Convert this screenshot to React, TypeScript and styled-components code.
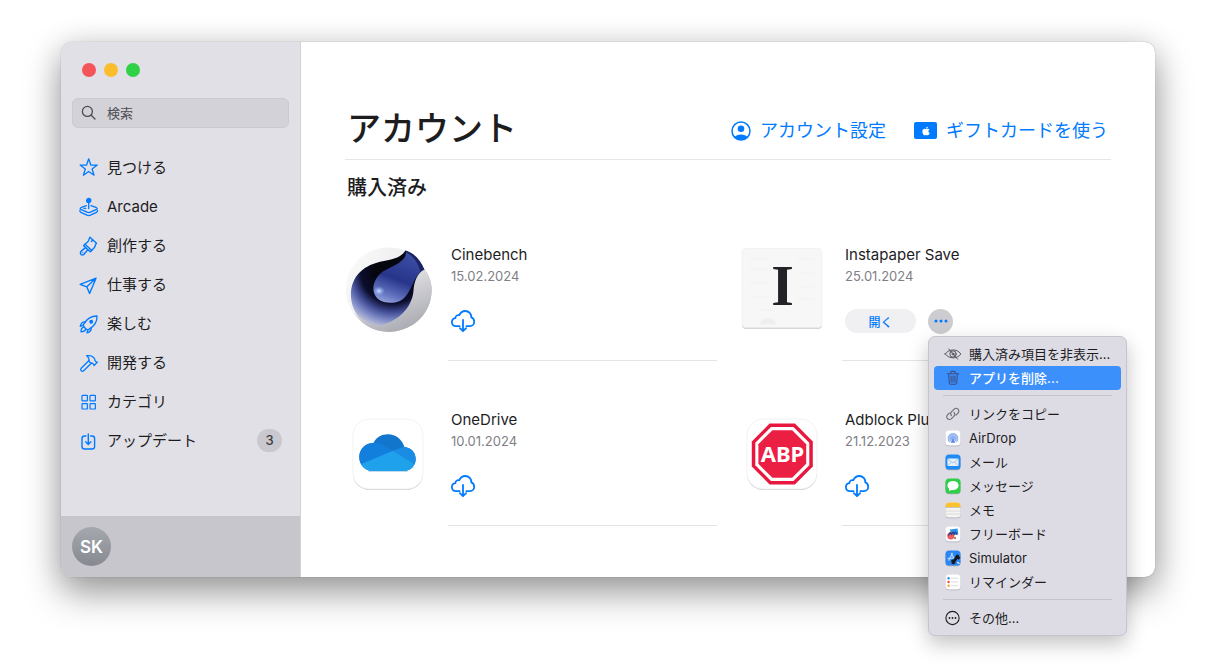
import React from "react";
import styled, { createGlobalStyle } from "styled-components";
import { Hammer } from "lucide-react";
import { FaApple } from "react-icons/fa";

const GlobalStyle = createGlobalStyle`
  *, *::before, *::after { box-sizing: border-box; }
  body {
    margin: 0;
    background: #ffffff;
    color: #1d1d1f;
    font-family: Inter, "Noto Sans CJK JP", sans-serif;
    font-size: 15px;
  }
  button, input { font: inherit; color: inherit; }
  button { border: 0; padding: 0; background: none; cursor: pointer; }
  a { color: inherit; text-decoration: none; }
  ul { list-style: none; margin: 0; padding: 0; }
  h1, h2, h3, p { margin: 0; }
  svg { display: block; flex: none; overflow: visible; }
`;

const blue = "#007aff";

const Desktop = styled.div`
  padding: 42px 61px 87px;
`;

const AppWindow = styled.div`
  display: flex;
  min-width: 900px;
  border-radius: 10px;
  background: #ffffff;
  box-shadow: 0 0 1px rgba(0, 0, 0, 0.4), 0 16px 36px rgba(0, 0, 0, 0.38), 0 0 30px rgba(0, 0, 0, 0.1);
`;

const Sidebar = styled.aside`
  display: flex;
  flex-direction: column;
  flex: none;
  width: 240px;
  border-right: 1px solid #d2d1d6;
  border-radius: 10px 0 0 10px;
  background: #e1e0e6;
`;

const TrafficLights = styled.div`
  display: flex;
  gap: 8px;
  padding: 21px 21px 0;
`;

const Light = styled.button<{ $color: string }>`
  width: 14px;
  height: 14px;
  border-radius: 50%;
  background: ${(p) => p.$color};
`;

const SearchField = styled.label`
  display: flex;
  align-items: center;
  gap: 10px;
  height: 30px;
  margin: 21px 11px 20px;
  padding: 0 8px;
  border: 1px solid #cbcad0;
  border-radius: 6px;
  background: #d3d2d8;
  color: #4c4c50;
`;

const SearchInput = styled.input`
  flex: 1;
  min-width: 0;
  padding: 0;
  border: 0;
  outline: 0;
  background: none;
  font-size: 13px;
  &::placeholder { color: #4c4c50; opacity: 1; }
`;

const NavLink = styled.a`
  display: flex;
  align-items: center;
  gap: 8px;
  height: 39px;
  padding: 0 18px;
  line-height: 24px;
  & > svg { color: ${blue}; }
`;

const Badge = styled.span`
  margin-left: auto;
  width: 25px;
  border-radius: 12px;
  background: #c9c8ce;
  color: #3c3c40;
  font-size: 13px;
  font-weight: 500;
  line-height: 23px;
  text-align: center;
`;

const Profile = styled.div`
  margin-top: auto;
  padding: 11px;
  border-bottom-left-radius: 10px;
  background: #c7c6cc;
`;

const Avatar = styled.button`
  display: block;
  width: 39px;
  height: 39px;
  border-radius: 50%;
  background: linear-gradient(#a5a8ae, #868a90);
  color: #ffffff;
  font-size: 17px;
  font-weight: 600;
`;

const Main = styled.main`
  flex: 1;
  min-width: 0;
  padding: 63px 44px 51px;
`;

const Header = styled.header`
  display: flex;
  align-items: center;
  justify-content: space-between;
  padding: 0 3px 6px 2px;
  border-bottom: 1px solid #e6e6e8;
`;

const Title = styled.h1`
  font-size: 34px;
  font-weight: 500;
  line-height: 48px;
`;

const HeaderLinks = styled.nav`
  display: flex;
  gap: 28px;
  padding-top: 3px;
`;

const HeaderLink = styled.a`
  display: flex;
  align-items: center;
  gap: 9px;
  color: ${blue};
  font-size: 18px;
  line-height: 28px;
`;

const GiftCard = styled.span`
  display: flex;
  align-items: center;
  justify-content: center;
  width: 23px;
  height: 17px;
  border-radius: 2px;
  background: ${blue};
  color: #ffffff;
`;

const SectionTitle = styled.h2`
  margin-top: 20px;
  padding-left: 2px;
  font-size: 20px;
  font-weight: 500;
  line-height: 16px;
`;

const AppGrid = styled.ul`
  display: grid;
  grid-template-columns: 1fr 1fr;
  column-gap: 22px;
`;

const AppRow = styled.li`
  display: flex;
  gap: 17px;
`;

const AppIcon = styled.div`
  padding-top: 51px;
`;

const AppInfo = styled.div`
  flex: 1;
  min-width: 0;
  padding: 48px 0 26px 3px;
  border-bottom: 1px solid #e4e4e6;
`;

const AppName = styled.h3`
  font-size: 15px;
  font-weight: 400;
  line-height: 22px;
`;

const AppDate = styled.p`
  color: #808085;
  font-size: 13px;
  line-height: 20px;
`;

const Actions = styled.div`
  display: flex;
  align-items: center;
  gap: 12px;
  height: 26px;
  margin-top: 22px;
`;

const DownloadButton = styled.button`
  color: ${blue};
`;

const OpenButton = styled.button`
  width: 71px;
  height: 24px;
  border-radius: 12px;
  background: #f0f0f2;
  color: ${blue};
  font-size: 12px;
  font-weight: 500;
`;

const MenuAnchor = styled.div`
  position: relative;
`;

const MoreButton = styled.button`
  display: flex;
  align-items: center;
  justify-content: center;
  width: 25px;
  height: 25px;
  border-radius: 50%;
  background: #cdcdd1;
  color: ${blue};
`;

const Menu = styled.div`
  position: absolute;
  top: 27px;
  left: 0;
  z-index: 1;
  width: 199px;
  padding: 5px;
  border: 1px solid #c6c5cc;
  border-radius: 7px;
  background: #dddce5;
  box-shadow: 0 8px 20px rgba(0, 0, 0, 0.24);
`;

const MenuItem = styled.button<{ $active?: boolean }>`
  display: flex;
  align-items: center;
  gap: 8px;
  width: 100%;
  height: 24px;
  padding: 0 11px;
  border-radius: 4px;
  background: ${(p) => (p.$active ? "#3b90fb" : "none")};
  color: ${(p) => (p.$active ? "#ffffff" : "#1d1d1f")};
  font-size: 13px;
  font-weight: ${(p) => (p.$active ? 500 : 400)};
  line-height: 20px;
  white-space: nowrap;
`;

const Separator = styled.hr`
  height: 1px;
  margin: 5px 9px 6px;
  border: 0;
  background: #c4c3cb;
`;

const Line = ({ size = 20, width = 1.4, children }: { size?: number; width?: number; children: React.ReactNode }) => (
  <svg width={size} height={size} viewBox={`0 0 ${size} ${size}`} fill="none" stroke="currentColor" strokeWidth={width} strokeLinecap="round" strokeLinejoin="round" aria-hidden="true">
    {children}
  </svg>
);

const nav = [
  {
    label: "見つける",
    icon: (
      <Line width={1.3}>
        <path d="M9.700 .8 L11.800 7 L18.300 7.100 L13.100 11 L15 17.200 L9.700 13.500 L4.400 17.200 L6.300 11 L1.100 7.100 L7.600 7 Z" />
      </Line>
    ),
  },
  {
    label: "Arcade",
    icon: (
      <Line width={1.3}>
        <circle cx="9.700" cy="3.600" r="2.100" fill="currentColor" />
        <path d="M9.700 4 V11.600" />
        <path d="M7.400 8.700 L1.900 10.700 Q.4 11.500 1.900 12.300 L8 15.200 Q9.700 15.900 11.400 15.200 L17.500 12.300 Q19 11.500 17.500 10.700 L12 8.700" />
        <path d="M.9 13.500 Q.6 14.700 1.900 15.300 L8 18.200 Q9.700 18.900 11.400 18.200 L17.500 15.300 Q18.800 14.700 18.500 13.500" />
        <path d="M5 11.400 H6.800" />
      </Line>
    ),
  },
  {
    label: "創作する",
    icon: (
      <Line>
        <path d="M11 1.200 L17.500 7.300 C16 8 16.800 10 15.200 11.800 L12.800 14.400 L6 8.200 L8.600 6 C10.200 4.600 9.800 2.600 11 1.200 Z" />
        <path d="M6 8.200 L4.600 9.700 L11.200 15.800 L12.800 14.400 M13.600 3.800 L12.400 5.600" />
        <path d="M6.600 11.600 L2.500 14.900 C1 16.200 1.200 17.800 2 18.400 C3 19.300 4.600 19 5.400 17.800 L8.800 13.800" />
        <path d="M3.800 16.600 V16.600" />
      </Line>
    ),
  },
  {
    label: "仕事する",
    icon: (
      <Line>
        <path d="M17 3.200 L1.200 9.300 L7.800 11.800 L10.600 18.400 Z M17 3.200 L7.800 11.800" />
      </Line>
    ),
  },
  {
    label: "楽しむ",
    icon: (
      <Line width={1.3}>
        <path d="M18 2 C12 2 7.600 4.800 4.400 10.600 L4.800 12.800 L7.600 15.400 L9.600 15.600 C15 12.400 18.400 8 18 2 Z" />
        <circle cx="12.200" cy="7.700" r="1.300" fill="currentColor" />
        <path d="M6.200 7.800 C3.400 7.600 1.800 9.400 1.200 12.400 L4.400 11.200" />
        <path d="M12.200 13.800 C12.400 16.600 11 18.200 8 18.800 L9 15.600" />
        <path d="M4.400 13.400 C2.600 13.800 2 15.400 2 17.800 C4.400 17.800 6 17.200 6.600 15.600" />
      </Line>
    ),
  },
  { label: "開発する", icon: <Hammer size={20} strokeWidth={1.5} aria-hidden="true" /> },
  {
    label: "カテゴリ",
    icon: (
      <Line width={1.2}>
        <rect x="3" y="3.400" width="5.400" height="5.400" rx=".6" />
        <rect x="11" y="3.400" width="5.400" height="5.400" rx=".6" />
        <rect x="3" y="11.600" width="5.400" height="5.400" rx=".6" />
        <rect x="11" y="11.600" width="5.400" height="5.400" rx=".6" />
      </Line>
    ),
  },
  {
    label: "アップデート",
    badge: "3",
    icon: (
      <Line width={1.4}>
        <path d="M7 5 H5.600 Q3 5 3 7.600 V15.400 Q3 18 5.600 18 H13 Q15.600 18 15.600 15.400 V7.600 Q15.600 5 13 5 H11.600" />
        <path d="M9.300 3 V13.200 M6.700 10.800 L9.300 13.400 L11.900 10.800" />
      </Line>
    ),
  },
];

const CloudDownload = () => (
  <svg width="24" height="22" viewBox="0 0 24 22" fill="none" stroke="currentColor" strokeWidth="1.800" strokeLinecap="round" strokeLinejoin="round" aria-hidden="true">
    <path d="M8.600 16.200 H5 C2.500 16.200 .9 14.400 .9 12.100 C.9 10 2.400 8.500 4.400 8.200 C4.300 5.900 6.400 4.600 8.300 5.200 C9.400 2.700 11.500 1 14.200 1 C18 1 20.500 4 20.300 7.400 C22.100 8.100 23.200 9.800 23.200 11.800 C23.200 14.400 21.300 16.200 19 16.200 H15.400" />
    <path d="M12 9.800 V20.600 M8.900 18.200 L12 21.200 L15.100 18.200" />
  </svg>
);

const CinebenchIcon = () => (
  <svg width="86" height="86" viewBox="0 0 86 86" aria-hidden="true">
    <defs>
      <linearGradient id="cbRing" x1="0" y1=".2" x2="1" y2=".8">
        <stop offset="0" stopColor="#fafafa" />
        <stop offset=".45" stopColor="#eeeef0" />
        <stop offset="1" stopColor="#a2a3aa" />
      </linearGradient>
      <linearGradient id="cbCap" x1=".3" y1="0" x2=".8" y2="1">
        <stop offset="0" stopColor="#eeeef1" />
        <stop offset="1" stopColor="#a5a6ad" />
      </linearGradient>
      <radialGradient id="cbBowl" gradientUnits="userSpaceOnUse" cx="48" cy="24" r="62">
        <stop offset=".3" stopColor="#06060f" />
        <stop offset=".52" stopColor="#0b0d2c" />
        <stop offset=".66" stopColor="#3f4a92" />
        <stop offset=".8" stopColor="#7f8bc8" />
        <stop offset=".95" stopColor="#c9cbd8" />
      </radialGradient>
      <linearGradient id="cbDrop" x1=".7" y1="0" x2=".35" y2="1">
        <stop offset="0" stopColor="#3c50a5" />
        <stop offset=".55" stopColor="#27348a" />
        <stop offset=".85" stopColor="#5f70bd" />
        <stop offset="1" stopColor="#8a98d6" />
      </linearGradient>
      <radialGradient id="cbShine">
        <stop offset="0" stopColor="#d2e4ff" />
        <stop offset="1" stopColor="#7f9ff0" stopOpacity="0" />
      </radialGradient>
    </defs>
    <path d="M60 3.500 C50 -1 30 -2 16 10 C1 22 -2 42 4 58 C12 77 31 87 52 84 C73 80 88 62 86.500 40 C86 33 83 26 79 22 Z" fill="url(#cbRing)" />
    <path d="M60.500 3.500 C54 13 44 12 31 16 C14 21 5 34 6 50 C7 67 20 82 40 80 C56 78 68 64 72 44 C74 36 78 30 79.500 23 C75 13 69 7 60.500 3.500 Z" fill="url(#cbBowl)" />
    <path d="M61 4 C62 16 45 19 36 26 C27 34 26 46 33 52 C41 58 55 57 61 49 C67 41 69 31 76 24 C74 14 68 7 61 4 Z" fill="url(#cbDrop)" />
    <path d="M60.500 3.500 C70 6 76 14 79.500 23 L75.500 25 C73 16 69 9 60.500 5 Z" fill="#1b2463" />
    <path d="M79.500 22.500 C72 26 69 35 68.500 44 C67 60 54 74 36 78 C25 79 14 73 8 64 C16 79 34 88 52 84 C73 80 88 62 86.500 40 C86 33 83 26 79.500 22.500 Z" fill="url(#cbCap)" />
    <ellipse cx="34" cy="44" rx="6" ry="5" fill="url(#cbShine)" />
  </svg>
);

const InstapaperIcon = () => (
  <svg width="86" height="86" viewBox="0 0 86 86" aria-hidden="true">
    <rect x="3" y="3" width="80" height="79" rx="4" fill="#d6d6d9" />
    <rect x="3" y="1.500" width="80" height="79" rx="4" fill="#f7f7f7" stroke="#ececee" strokeWidth=".6" />
    <path d="M10 12 H30 M58 12 H76 M10 22 H30 M58 26 H76 M10 36 H30 M58 40 H76 M10 50 H30 M58 52 H76" stroke="#f5f5f5" strokeWidth="3" />
    <path d="M21 77 A8.500 8.500 0 0 1 37 77 Z M21 63 H33" fill="#efeff0" stroke="#efeff0" />
    <text x="43.500" y="58" textAnchor="middle" fontFamily="Liberation Serif, serif" fontWeight="700" fontSize="58" fill="#222326">I</text>
  </svg>
);

const WhiteTile = () => (
  <>
    <rect x="8" y="8" width="70" height="70" rx="16" fill="#d4d4d7" />
    <rect x="8" y="7" width="70" height="70" rx="16" fill="#ffffff" stroke="#ececee" strokeWidth=".7" />
  </>
);

const OneDriveIcon = () => (
  <svg width="86" height="86" viewBox="0 0 86 86" aria-hidden="true">
    <clipPath id="odCloud">
      <path d="M28 59 C20 59 14.300 53 14.300 45 C14.300 37 20.500 31 28.500 31 C31 25.500 36.500 22.300 43 22.300 C51 22.300 57 27.500 59.500 35 C66 35.500 70.700 40.500 70.700 47 C70.700 54 65.500 59 59 59 Z" />
    </clipPath>
    <WhiteTile />
    <path d="M24 59.300 H62" stroke="#c3d9ee" strokeWidth="1.600" strokeLinecap="round" />
    <g clipPath="url(#odCloud)">
      <rect x="14" y="22" width="57" height="38" fill="#1276cc" />
      <path d="M14 30 H28 C34 30 38 34 48 38.700 L14 54 Z" fill="#137fdd" />
      <path d="M48 38.700 L58 35 H72 V54 L69 52 Z" fill="#1a8ce4" />
      <path d="M14 53 L48 38.700 L72 53.500 V60 H14 Z" fill="#20a1ec" />
    </g>
  </svg>
);

const AdblockIcon = () => (
  <svg width="86" height="86" viewBox="0 0 86 86" aria-hidden="true">
    <WhiteTile />
    <path d="M30.600 11.500 H55.900 L73.800 29.400 V54.600 L55.900 72.500 H30.600 L12.800 54.600 V29.400 Z" fill="#e8173d" />
    <path d="M32 15 H54.500 L70.300 30.800 V53.200 L54.500 69 H32 L16.300 53.200 V30.800 Z" fill="#ffffff" />
    <path d="M33.400 18.200 H53.200 L67.200 32.200 V51.800 L53.200 65.800 H33.400 L19.400 51.800 V32.200 Z" fill="#ea1f43" />
    <text x="43.500" y="50" textAnchor="middle" fontFamily="Noto Sans, sans-serif" fontWeight="700" fontSize="22" fill="#ffffff">ABP</text>
  </svg>
);

const Tile = ({ fill, children }: { fill: string; children: React.ReactNode }) => (
  <svg width="16" height="16" viewBox="0 0 16 16" fill="none" aria-hidden="true">
    <rect x=".5" y="1.200" width="15" height="15" rx="3.500" fill="#a9a9b2" />
    <rect x=".5" y=".5" width="15" height="15" rx="3.500" fill={fill} />
    {children}
  </svg>
);

type Entry = { label: string; icon: React.ReactNode; active?: boolean };

const menuGroups: Entry[][] = [
  [
    {
      label: "購入済み項目を非表示...",
      icon: (
        <Line size={16} width={1}>
          <g stroke="#55555c">
            <path d="M.2 8 C3 3.200 12 2 15.800 8 C12.500 13 4 13.400 .2 8 Z" />
            <circle cx="8" cy="8" r="3.200" />
            <circle cx="8" cy="8" r="1" />
            <path d="M3.800 3 L12.600 13.200" />
          </g>
        </Line>
      ),
    },
    {
      label: "アプリを削除...",
      active: true,
      icon: (
        <Line size={16} width={1.1}>
          <g stroke="#3d4f8c">
            <path d="M3.600 4 L4.300 13 Q4.400 14.300 5.600 14.300 H10.400 Q11.600 14.300 11.700 13 L12.400 4 M2.200 3.800 H13.800 M5.800 3.600 V2.200 Q5.800 1.400 6.600 1.400 H9.400 Q10.200 1.400 10.200 2.200 V3.600" />
            <path d="M6 6 L6.200 12 M8 6 V12 M10 6 L9.800 12" />
          </g>
        </Line>
      ),
    },
  ],
  [
    {
      label: "リンクをコピー",
      icon: (
        <Line size={16} width={1.1}>
          <g stroke="#6c6c74">
            <path d="M6.400 9.600 C5.200 8.200 5.500 6.800 6.600 5.700 L9 3.300 C10.200 2.100 11.900 2.100 13 3.200 C14.100 4.300 14.100 6 13 7.100 L11 9.100" />
            <path d="M9 6.400 C10.200 7.800 9.900 9.200 8.800 10.300 L6.500 12.600 C5.300 13.800 3.600 13.800 2.500 12.700 C1.400 11.600 1.400 9.900 2.500 8.800 L4.300 7" />
          </g>
        </Line>
      ),
    },
    {
      label: "AirDrop",
      icon: (
        <Tile fill="#ffffff">
          <path d="M4.400 12.400 A5.400 5.400 0 1 1 11.600 12.400 L8 8 Z" fill="#8fb0f2" />
          <path d="M5 11.600 A4 4 0 1 1 11 11.600" stroke="#d8e4fc" strokeWidth=".6" />
          <path d="M8 7.600 L10.400 12.800 H5.600 Z" fill="#5c88e8" />
        </Tile>
      ),
    },
    {
      label: "メール",
      icon: (
        <Tile fill="#1f8cf5">
          <rect x="2.400" y="4.400" width="11.200" height="7.600" rx="1" fill="#e8f0fa" />
          <path d="M2.800 5 L8 9 L13.200 5 M2.800 11.600 L6.400 8 M13.200 11.600 L9.600 8" stroke="#8fb0d8" strokeWidth=".7" />
        </Tile>
      ),
    },
    {
      label: "メッセージ",
      icon: (
        <Tile fill="#2fce4b">
          <ellipse cx="8" cy="7.500" rx="5.600" ry="4.600" fill="#ffffff" />
          <path d="M4.600 10 L3.800 13 L8 11.600 Z" fill="#ffffff" />
        </Tile>
      ),
    },
    {
      label: "メモ",
      icon: (
        <Tile fill="#f5f4f2">
          <path d="M.5 5 V4 Q.5 .5 4 .5 H12 Q15.500 .5 15.500 4 V5 Z" fill="#fbc22f" />
          <path d="M.5 5.500 H15.500" stroke="#b8b2a4" strokeWidth=".7" />
          <path d="M1 9 H15 M1 12 H15" stroke="#d6d5d3" strokeWidth=".8" />
        </Tile>
      ),
    },
    {
      label: "フリーボード",
      icon: (
        <Tile fill="#ffffff">
          <path d="M5 3.500 L12.600 2.400 L13.200 8.600 L6 9.400 Z" fill="#2a93e8" />
          <circle cx="5.800" cy="9.800" r="3.600" fill="#ee5a5f" />
          <path d="M3.600 9.600 C5 5 6 6.500 6.500 9 C7.500 5.500 8.500 5.500 9 8 C10 5.500 11 6 12 8.600" stroke="#203e87" strokeWidth="1.200" />
          <circle cx="10" cy="12" r="1" fill="#8b5c3e" />
        </Tile>
      ),
    },
    {
      label: "Simulator",
      icon: (
        <Tile fill="#2a86f2">
          <path d="M7.600 3 L3.600 10.600 M6 3 L9.600 9.400 M2.600 8.400 H8" stroke="#a9d2ff" strokeWidth="1.300" />
          <path d="M8 12.600 L12.600 6.200" stroke="#17191f" strokeWidth="3" strokeLinecap="round" />
          <path d="M7 10 L9.600 13.800 M11 5.800 L14.600 8.600" stroke="#17191f" strokeWidth="2.600" />
          <path d="M12.200 12.200 L14.400 13.600" stroke="#ffffff" strokeWidth="1.200" />
        </Tile>
      ),
    },
    {
      label: "リマインダー",
      icon: (
        <Tile fill="#ffffff">
          <path d="M6 4.200 H13.400 M6 8 H13.400 M6 11.800 H13.400" stroke="#d2d2d6" strokeWidth=".8" />
          <circle cx="3.600" cy="4.200" r="1.200" fill="#2f8df5" />
          <circle cx="3.600" cy="8" r="1.200" fill="#ee4d45" />
          <circle cx="3.600" cy="11.800" r="1.200" fill="#f8a72c" />
        </Tile>
      ),
    },
  ],
  [
    {
      label: "その他...",
      icon: (
        <Line size={16} width={1.1}>
          <circle cx="7.500" cy="8" r="6.600" />
          <g fill="currentColor" stroke="none">
            <circle cx="4.500" cy="8" r=".9" />
            <circle cx="7.500" cy="8" r=".9" />
            <circle cx="10.500" cy="8" r=".9" />
          </g>
        </Line>
      ),
    },
  ],
];

const ContextMenu = () => (
  <Menu role="menu">
    {menuGroups.map((group, i) => (
      <React.Fragment key={i}>
        {i > 0 && <Separator />}
        {group.map((entry) => (
          <MenuItem key={entry.label} type="button" role="menuitem" $active={entry.active}>
            {entry.icon}
            {entry.label}
          </MenuItem>
        ))}
      </React.Fragment>
    ))}
  </Menu>
);

const apps = [
  { name: "Cinebench", date: "15.02.2024", icon: <CinebenchIcon /> },
  { name: "Instapaper Save", date: "25.01.2024", icon: <InstapaperIcon />, installed: true },
  { name: "OneDrive", date: "10.01.2024", icon: <OneDriveIcon /> },
  { name: "Adblock Plus", date: "21.12.2023", icon: <AdblockIcon /> },
];

export default function App() {
  return (
    <Desktop>
      <GlobalStyle />
      <AppWindow>
        <Sidebar>
          <TrafficLights>
            <Light type="button" $color="#f4555a" aria-label="閉じる" />
            <Light type="button" $color="#fbbd2e" aria-label="しまう" />
            <Light type="button" $color="#2fd146" aria-label="拡大" />
          </TrafficLights>
          <SearchField>
            <Line size={16} width={1.3}>
              <circle cx="6.400" cy="6.400" r="5" />
              <path d="M10.200 10.200 L14 14" />
            </Line>
            <SearchInput type="text" placeholder="検索" aria-label="検索" />
          </SearchField>
          <nav>
            <ul>
              {nav.map((item) => (
                <li key={item.label}>
                  <NavLink href="#">
                    {item.icon}
                    {item.label}
                    {item.badge && <Badge>{item.badge}</Badge>}
                  </NavLink>
                </li>
              ))}
            </ul>
          </nav>
          <Profile>
            <Avatar type="button">SK</Avatar>
          </Profile>
        </Sidebar>
        <Main>
          <Header>
            <Title>アカウント</Title>
            <HeaderLinks>
              <HeaderLink href="#">
                <Line width={1.5}>
                  <circle cx="10" cy="10" r="9" />
                  <circle cx="10" cy="7.800" r="3.300" fill="currentColor" stroke="none" />
                  <path d="M3.600 16 C5.500 12.600 14.500 12.600 16.400 16 C13 19.600 7 19.600 3.600 16 Z" fill="currentColor" stroke="none" />
                </Line>
                アカウント設定
              </HeaderLink>
              <HeaderLink href="#">
                <GiftCard>
                  <FaApple size={10} aria-hidden="true" />
                </GiftCard>
                ギフトカードを使う
              </HeaderLink>
            </HeaderLinks>
          </Header>
          <SectionTitle>購入済み</SectionTitle>
          <AppGrid>
            {apps.map((app) => (
              <AppRow key={app.name}>
                <AppIcon>{app.icon}</AppIcon>
                <AppInfo>
                  <AppName>{app.name}</AppName>
                  <AppDate>{app.date}</AppDate>
                  <Actions>
                    {app.installed ? (
                      <>
                        <OpenButton type="button">開く</OpenButton>
                        <MenuAnchor>
                          <MoreButton type="button" aria-label="その他" aria-haspopup="menu" aria-expanded="true">
                            <svg width="14" height="4" viewBox="0 0 14 4" fill="currentColor" aria-hidden="true">
                              <circle cx="2" cy="2" r="1.500" />
                              <circle cx="7" cy="2" r="1.500" />
                              <circle cx="12" cy="2" r="1.500" />
                            </svg>
                          </MoreButton>
                          <ContextMenu />
                        </MenuAnchor>
                      </>
                    ) : (
                      <DownloadButton type="button" aria-label="ダウンロード">
                        <CloudDownload />
                      </DownloadButton>
                    )}
                  </Actions>
                </AppInfo>
              </AppRow>
            ))}
          </AppGrid>
        </Main>
      </AppWindow>
    </Desktop>
  );
}
